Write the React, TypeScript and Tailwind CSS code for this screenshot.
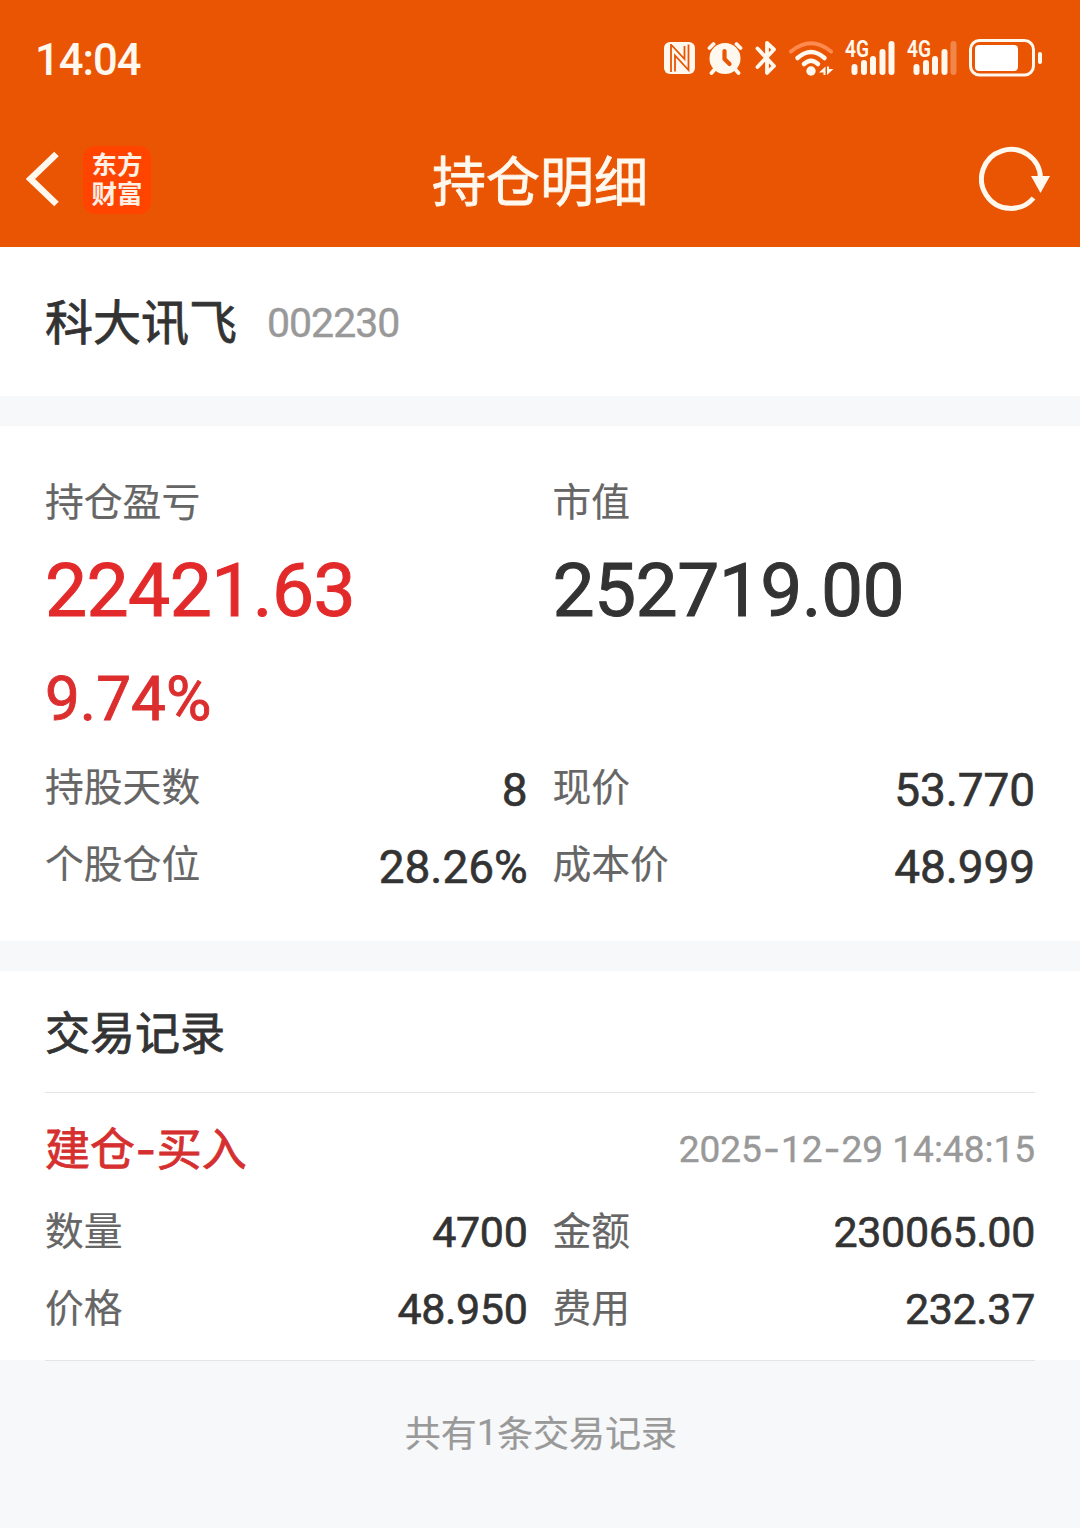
import { Fragment, type ReactNode } from "react";

type Item = { label: string; value: string };

const position: Item[] = [
  { label: "持股天数", value: "8" },
  { label: "现价", value: "53.770" },
  { label: "个股仓位", value: "28.26%" },
  { label: "成本价", value: "48.999" },
];

const trade: Item[] = [
  { label: "数量", value: "4700" },
  { label: "金额", value: "230065.00" },
  { label: "价格", value: "48.950" },
  { label: "费用", value: "232.37" },
];

function Num({ className = "", children }: { className?: string; children: ReactNode }) {
  return <span className={`font-['Roboto','Noto_Sans_CJK_SC',sans-serif] ${className}`}>{children}</span>;
}

function Dash({ className = "" }: { className?: string }) {
  return <span className={`font-['Inter',sans-serif] ${className}`}>-</span>;
}

function Signal({ weak = false }: { weak?: boolean }) {
  return (
    <svg width="51" height="48" viewBox="-1 -6 51 48" fill="#fff8ee">
      <text x="0" y="16.500" fontSize="23" fontWeight="600" fontFamily="Roboto, sans-serif" textLength="24" lengthAdjust="spacingAndGlyphs">
        4G
      </text>
      <rect x="6.500" y="24" width="6" height="11" rx="3" />
      <rect x="16" y="20" width="6" height="15" rx="3" />
      <rect x="25" y="16" width="6" height="19" rx="3" />
      <rect x="34.500" y="9" width="6" height="26" rx="3" />
      <rect x="43.500" y="1" width="6" height="34" rx="3" opacity={weak ? 0.3 : 1} />
    </svg>
  );
}

function StatusBar() {
  return (
    <div className="flex h-[117px] items-center justify-between pl-[35px] pr-[37px]">
      <Num className="pt-[4px] text-[43.500px] font-medium leading-none tracking-[-1px] text-[#fff8ee]">14:04</Num>
      <div className="flex items-center pb-[1px]">
        {/* NFC */}
        <svg className="mr-[11px]" width="32" height="32" viewBox="0 0 32 32" fill="none">
          <rect width="31" height="32" rx="6" fill="#fff8ee" />
          <path d="M7 2v28M7 2.500L20.500 17V4" stroke="#ea5504" strokeWidth="1.800" />
          <path d="M11 29.500V13.500L24.500 28V2.500" stroke="#ea5504" strokeWidth="1.800" />
        </svg>
        {/* Alarm */}
        <svg className="mr-[12px]" width="36" height="34" viewBox="0 0 36 34" fill="none" strokeLinecap="round">
          <circle cx="18" cy="17.500" r="15.500" fill="#fff8ee" />
          <path d="M2.500 7l4-4M29.500 3l4 4M8 28l-3.500 4M28 28l3.500 4" stroke="#fff8ee" strokeWidth="3.800" />
          <path d="M17.500 10v8l5 5" stroke="#ea5504" strokeWidth="4.200" strokeLinejoin="round" />
        </svg>
        {/* Bluetooth */}
        <svg className="mr-[12px]" width="22" height="36" viewBox="0 0 22 36" fill="none">
          <path d="M2.500 8.500L19 26l-7 7V3l7 6.500L2.500 27" stroke="#fff8ee" strokeWidth="3.800" strokeLinecap="round" strokeLinejoin="round" />
        </svg>
        {/* Wi-Fi */}
        <svg className="mr-[10px]" width="45" height="35" viewBox="0 0 45 35" fill="none" strokeLinecap="round">
          <path d="M2 10.500Q22 -6 42 10.500" stroke="#ff8a50" strokeWidth="4" />
          <path d="M8.500 17Q22 5 35.500 17" stroke="#fff8ee" strokeWidth="4.500" />
          <path d="M15 23Q22 16.500 29 23" stroke="#fff8ee" strokeWidth="4.500" />
          <circle cx="22" cy="30" r="4.700" fill="#fff8ee" />
          <path d="M36.500 25.500v8.500h-2v-2.500h-4.500zM38 34v-8.500h2v2.500h4.500z" fill="#fff8ee" />
        </svg>
        <Signal />
        <span className="w-[11px]" />
        <Signal weak />
        <svg className="ml-[12px]" width="74" height="38" viewBox="0 0 74 38" fill="none">
          <rect x="1.500" y="1.500" width="63" height="34.500" rx="9" stroke="#fff8ee" strokeWidth="3" />
          <rect x="6" y="6" width="43" height="26" rx="4" fill="#fff" />
          <rect x="69" y="13" width="4" height="12" rx="2" fill="#fff8ee" />
        </svg>
      </div>
    </div>
  );
}

function NavBar() {
  return (
    <div className="grid h-[130px] grid-cols-3 items-center pb-[5px] pl-[26px] pr-[29px]">
      <div className="flex items-center">
        <svg className="mb-[2px]" width="34" height="56" viewBox="0 0 34 56" fill="none">
          <path d="M30.500 3L4.500 28l26 25" stroke="#fff8ee" strokeWidth="6.500" />
        </svg>
        <div className="ml-[23px] flex h-[68px] w-[68px] flex-col items-center justify-center gap-[4px] rounded-[12px] bg-[#ff4400] pb-[5px] text-[25.500px] font-bold leading-[25px] text-[#fff0e6]">
          <span>东方</span>
          <span>财富</span>
        </div>
      </div>
      <h1 className="pb-[1px] pl-[3px] text-center text-[54px] leading-none text-[#fff8ee] [-webkit-text-stroke:0.8px]">
        持仓明细
      </h1>
      <svg className="mb-[3px] justify-self-end" width="72" height="66" viewBox="0 0 72 66" fill="none">
        <path d="M54.500 53A29.500 29.500 0 1 1 61.500 33" stroke="#fff8ee" strokeWidth="5" />
        <path d="M52 31h19l-9.500 17z" fill="#fff8ee" />
      </svg>
    </div>
  );
}

function Rows({ items, valueClass }: { items: Item[]; valueClass: string }) {
  return (
    <div className="grid grid-cols-2 gap-x-[25px]">
      {items.map((item) => (
        <div key={item.label} className="flex h-[77px] items-center justify-between leading-none">
          <span className="text-[38.800px] text-[#666] [-webkit-text-stroke:0.2px]">{item.label}</span>
          <Num className={`text-[#333] [-webkit-text-stroke:0.6px] ${valueClass}`}>{item.value}</Num>
        </div>
      ))}
    </div>
  );
}

export default function App() {
  const date = "2025-12-29 14:48:15".split("-");

  return (
    <div className="min-h-[1528px] w-[1080px] bg-[#f7f8fa] font-['Noto_Sans_CJK_SC',sans-serif] text-[#333]">
      <header className="bg-[#ea5504]">
        <StatusBar />
        <NavBar />
      </header>

      {/* Stock */}
      <section className="flex h-[149px] items-center bg-white px-[45px] leading-none">
        <h2 className="pb-[5px] text-[48px] [-webkit-text-stroke:0.8px]">科大讯飞</h2>
        <Num className="ml-[30px] pt-[3px] text-[41px] tracking-[-1px] text-[#999] [-webkit-text-stroke:0.4px]">002230</Num>
      </section>

      {/* Position */}
      <section className="mt-[30px] h-[515px] bg-white px-[45px] pt-[34px] leading-none">
        <div className="grid grid-cols-2 gap-x-[25px]">
          <div>
            <div className="flex h-[78px] items-center text-[38.800px] text-[#666] [-webkit-text-stroke:0.2px]">持仓盈亏</div>
            <Num className="flex h-[106px] items-center pb-[2px] text-[75px] tracking-[-0.6px] text-[#e32a2a] [-webkit-text-stroke:1px]">
              22421.63
            </Num>
            <Num className="flex h-[102px] items-center pt-[8px] text-[62px] text-[#dc2e2e] [-webkit-text-stroke:0.9px]">
              9.74%
            </Num>
          </div>
          <div>
            <div className="flex h-[78px] items-center text-[38.800px] text-[#666] [-webkit-text-stroke:0.2px]">市值</div>
            <Num className="flex h-[106px] items-center pb-[2px] text-[75px] tracking-[-0.6px] [-webkit-text-stroke:1px]">
              252719.00
            </Num>
          </div>
        </div>
        <Rows items={position} valueClass="pt-[10px] text-[46px] tracking-[-0.1px]" />
      </section>

      {/* Trades */}
      <section className="mt-[30px] bg-white leading-none">
        <div className="flex h-[121px] items-center px-[45px] pb-[2px]">
          <h3 className="text-[45px] [-webkit-text-stroke:0.8px]">交易记录</h3>
        </div>
        <div className="mx-[45px] h-px bg-[#e5e5e5]" />
        <div className="h-[267px] px-[45px]">
          <div className="flex h-[97px] items-center justify-between pt-[11px]">
            <span className="pt-[1px] text-[45px] text-[#d52f2f] [-webkit-text-stroke:0.8px]">
              建仓
              <Dash className="mx-[0.5px]" />
              买入
            </span>
            <Num className="pt-[3px] text-[37px] text-[#999] [-webkit-text-stroke:0.4px]">
              {date.map((part, i) => (
                <Fragment key={i}>
                  {i > 0 && <Dash className="mx-[1px]" />}
                  {part}
                </Fragment>
              ))}
            </Num>
          </div>
          <Rows items={trade} valueClass="pt-[8px] text-[43px] tracking-[-0.350px]" />
        </div>
      </section>

      <footer className="px-[45px]">
        <div className="h-px bg-[#e5e5e5]" />
        <div className="flex h-[140px] items-center justify-center pl-[2px] text-[36px] leading-none text-[#999] [-webkit-text-stroke:0.2px]">
          共有<Num className="pt-[4px]">1</Num>条交易记录
        </div>
      </footer>
    </div>
  );
}
